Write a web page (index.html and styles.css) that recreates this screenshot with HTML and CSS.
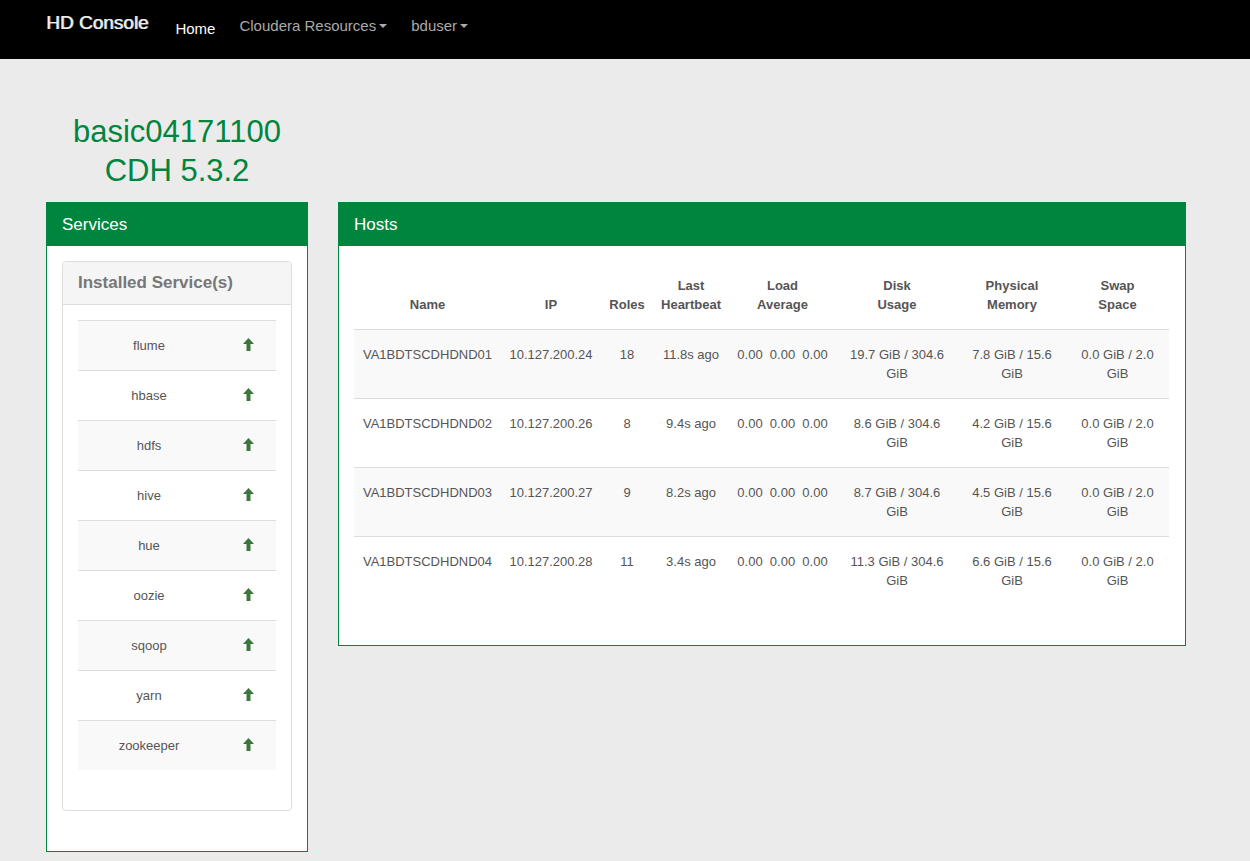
FILE: index.html
```html
<!DOCTYPE html>
<html lang="en">
<head>
<meta charset="utf-8">
<title>HD Console</title>
<link rel="stylesheet" href="styles.css">
</head>
<body>
<svg class="sprite" aria-hidden="true">
  <symbol id="arrow-up" viewBox="0 0 11 13"><path d="M5.5 0 11 6H7.5v7h-4V6H0z"/></symbol>
</svg>
<header class="navbar">
  <a class="brand" href="#">HD Console</a>
  <nav class="nav">
    <a class="nav-link active" href="#">Home</a>
    <a class="nav-link" href="#">Cloudera Resources<span class="caret"></span></a>
    <a class="nav-link" href="#">bduser<span class="caret"></span></a>
  </nav>
</header>
<main class="page">
  <div class="side">
    <h1 class="cluster">basic04171100<br>CDH 5.3.2</h1>
    <section class="panel">
      <h2 class="panel-title">Services</h2>
      <div class="panel-body">
        <section class="card">
          <h3 class="card-title">Installed Service(s)</h3>
          <div class="panel-body">
            <table class="grid services">
              <colgroup><col class="c-service"><col class="c-status"></colgroup>
              <tbody>
                <tr><td>flume</td><td><svg class="up" role="img" aria-label="up"><use href="#arrow-up"/></svg></td></tr>
                <tr><td>hbase</td><td><svg class="up" role="img" aria-label="up"><use href="#arrow-up"/></svg></td></tr>
                <tr><td>hdfs</td><td><svg class="up" role="img" aria-label="up"><use href="#arrow-up"/></svg></td></tr>
                <tr><td>hive</td><td><svg class="up" role="img" aria-label="up"><use href="#arrow-up"/></svg></td></tr>
                <tr><td>hue</td><td><svg class="up" role="img" aria-label="up"><use href="#arrow-up"/></svg></td></tr>
                <tr><td>oozie</td><td><svg class="up" role="img" aria-label="up"><use href="#arrow-up"/></svg></td></tr>
                <tr><td>sqoop</td><td><svg class="up" role="img" aria-label="up"><use href="#arrow-up"/></svg></td></tr>
                <tr><td>yarn</td><td><svg class="up" role="img" aria-label="up"><use href="#arrow-up"/></svg></td></tr>
                <tr><td>zookeeper</td><td><svg class="up" role="img" aria-label="up"><use href="#arrow-up"/></svg></td></tr>
              </tbody>
            </table>
          </div>
        </section>
      </div>
    </section>
  </div>
  <section class="panel hosts-panel">
    <h2 class="panel-title">Hosts</h2>
    <div class="panel-body">
      <table class="grid hosts">
        <colgroup><col class="c-name"><col class="c-ip"><col class="c-roles"><col class="c-beat"><col class="c-load"><col class="c-disk"><col class="c-mem"><col class="c-swap"></colgroup>
        <thead>
          <tr><th>Name</th><th>IP</th><th>Roles</th><th>Last<br>Heartbeat</th><th>Load<br>Average</th><th>Disk<br>Usage</th><th>Physical<br>Memory</th><th>Swap<br>Space</th></tr>
        </thead>
        <tbody>
          <tr><td>VA1BDTSCDHDND01</td><td>10.127.200.24</td><td>18</td><td>11.8s ago</td><td>0.00&nbsp; 0.00&nbsp; 0.00</td><td>19.7 GiB / 304.6 GiB</td><td>7.8 GiB / 15.6 GiB</td><td>0.0 GiB / 2.0 GiB</td></tr>
          <tr><td>VA1BDTSCDHDND02</td><td>10.127.200.26</td><td>8</td><td>9.4s ago</td><td>0.00&nbsp; 0.00&nbsp; 0.00</td><td>8.6 GiB / 304.6 GiB</td><td>4.2 GiB / 15.6 GiB</td><td>0.0 GiB / 2.0 GiB</td></tr>
          <tr><td>VA1BDTSCDHDND03</td><td>10.127.200.27</td><td>9</td><td>8.2s ago</td><td>0.00&nbsp; 0.00&nbsp; 0.00</td><td>8.7 GiB / 304.6 GiB</td><td>4.5 GiB / 15.6 GiB</td><td>0.0 GiB / 2.0 GiB</td></tr>
          <tr><td>VA1BDTSCDHDND04</td><td>10.127.200.28</td><td>11</td><td>3.4s ago</td><td>0.00&nbsp; 0.00&nbsp; 0.00</td><td>11.3 GiB / 304.6 GiB</td><td>6.6 GiB / 15.6 GiB</td><td>0.0 GiB / 2.0 GiB</td></tr>
        </tbody>
      </table>
    </div>
  </section>
</main>
</body>
</html>
```
FILE: styles.css
```css
* { box-sizing: border-box; }
body {
  margin: 0;
  background: #ebebeb;
  color: #555;
  font: 13px/19px "Liberation Sans", Arial, sans-serif;
}
.sprite { display: none; }

.navbar {
  display: flex;
  align-items: flex-start;
  gap: 27px;
  min-height: 59px;
  padding: 12px 64px 12px 46px;
  background: #000;
}
.brand {
  color: #eee;
  font-size: 19px;
  line-height: 22px;
  text-decoration: none;
  text-shadow: 1px 0 0 #bbb;
}
.nav {
  display: flex;
  align-items: flex-start;
  gap: 24px;
  padding-top: 4px;
}
.nav-link {
  display: flex;
  align-items: center;
  gap: 3px;
  color: #aaa;
  font-size: 15px;
  line-height: 20px;
  text-decoration: none;
}
.nav-link.active { padding-top: 3px; color: #fff; }
.caret {
  border-top: 4px solid;
  border-left: 4px solid transparent;
  border-right: 4px solid transparent;
}

.page {
  display: grid;
  grid-template-columns: 262px minmax(0, 1fr);
  column-gap: 30px;
  align-items: start;
  padding: 53px 64px 9px 46px;
}
.cluster {
  margin: 0 0 12px;
  color: #00853e;
  font-size: 31px;
  line-height: 39px;
  font-weight: 400;
  text-align: center;
}
.hosts-panel { margin-top: 90px; }
.panel { background: #fff; border: 1px solid #00853e; }
.panel-title {
  margin: 0;
  padding: 10px 15px;
  background: #00853e;
  color: #fff;
  font-size: 17px;
  line-height: 23px;
  font-weight: 400;
}
.panel-body { padding: 15px 15px 40px; }
.hosts-panel .panel-body { padding-right: 16px; }
.card { border: 1px solid #ddd; border-radius: 4px; }
.card-title {
  margin: 0;
  padding: 10px 15px;
  border-bottom: 1px solid #ddd;
  border-radius: 3px 3px 0 0;
  background: #f5f5f5;
  color: #777;
  font-size: 17px;
  line-height: 22px;
}

.grid {
  width: 100%;
  table-layout: fixed;
  border-spacing: 0;
  text-align: center;
}
.grid th { padding: 15px 8px; vertical-align: bottom; }
.grid td {
  padding: 15px 8px;
  border-top: 1px solid #ddd;
  vertical-align: top;
}
.grid tbody tr:nth-child(odd) { background: #f9f9f9; }
.c-service { width: 142px; }
.c-status { width: 56px; }
.c-name { width: 147px; }
.c-ip { width: 100px; }
.c-roles { width: 52px; }
.c-beat { width: 76px; }
.c-load { width: 107px; }
.c-disk { width: 122px; }
.c-mem { width: 108px; }
.c-swap { width: 103px; }
.up {
  display: block;
  width: 11px;
  height: 13px;
  margin: 2px auto 0;
  fill: #3c763d;
}
```
